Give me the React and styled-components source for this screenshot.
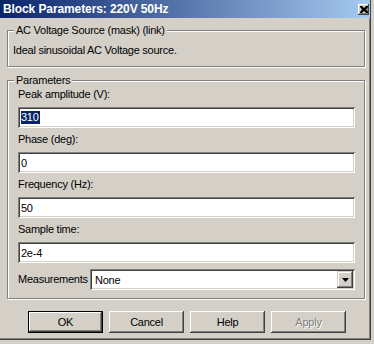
import React from "react"
import styled, { createGlobalStyle } from "styled-components"

const GlobalStyle = createGlobalStyle`
  html, body {
    margin: 0;
    padding: 0;
    background: #d4d0c8;
  }
  body {
    font-family: "Liberation Sans", Arial, sans-serif;
    font-size: 11px;
    color: #000;
  }
`

const Screen = styled.div`
  width: 374px;
  height: 344px;
  background: #d4d0c8;
  overflow: hidden;
`

const Frame = styled.div`
  box-sizing: border-box;
  width: 371px;
  height: 340px;
  display: flex;
  flex-direction: column;
  border-right: 1px solid #404040;
  border-bottom: 1px solid #404040;
  box-shadow: inset -1px -1px 0 #808080;
`

const TitleBar = styled.div`
  height: 18px;
  display: flex;
  align-items: center;
  justify-content: space-between;
  background: linear-gradient(to right, #0a246a, #a6caf0);
  padding-left: 3px;
`

const Title = styled.span`
  color: #fff;
  font-weight: bold;
  font-size: 12px;
  letter-spacing: -0.1px;
  line-height: 18px;
  white-space: nowrap;
`

const CloseButton = styled.div`
  box-sizing: border-box;
  width: 11px;
  height: 11px;
  margin-right: 1px;
  background: #d4d0c8;
  display: flex;
  align-items: center;
  justify-content: center;
  box-shadow: inset -1px -1px 0 #404040, inset 1px 1px 0 #ffffff,
    inset -2px -2px 0 #808080;
`

const Group = styled.fieldset`
  box-sizing: border-box;
  width: 358px;
  margin: ${p => p.$top}px 0 0 7px;
  padding: ${p => p.$pad};
  min-inline-size: 0;
  border: 1px solid #808080;
  box-shadow: inset 1px 1px 0 #ffffff, 1px 1px 0 #ffffff;
`

const Legend = styled.legend`
  padding: 0 2px;
  margin-left: ${p => p.$shift}px;
  font-size: 11px;
  line-height: 13px;
  letter-spacing: -0.25px;
  background: #d4d0c8;
  white-space: nowrap;
`

const Text = styled.div`
  line-height: 13px;
  letter-spacing: -0.25px;
  white-space: nowrap;
`

const FieldLabel = styled(Text)`
  margin-top: ${p => (p.$first ? 0 : 5)}px;
  margin-bottom: 6px;
`

const TextField = styled.div`
  box-sizing: border-box;
  height: 21px;
  padding-left: 3px;
  display: flex;
  align-items: center;
  background: #fff;
  letter-spacing: -0.25px;
  white-space: nowrap;
  box-shadow: inset 1px 1px 0 #808080, inset -1px -1px 0 #ffffff,
    inset 2px 2px 0 #404040, inset -2px -2px 0 #d4d0c8;
`

const Selected = styled.span`
  background: #0a246a;
  color: #fff;
  line-height: 13px;
  padding: 0 1px 0 0;
`

const SelectRow = styled.div`
  display: flex;
  align-items: center;
  margin-top: 6px;
`

const SelectLabel = styled(Text)`
  width: 72px;
  flex: none;
`

const SelectBox = styled(TextField)`
  flex: 1;
  justify-content: space-between;
  padding: 2px 2px 2px 5px;
`

const DropButton = styled.div`
  box-sizing: border-box;
  width: 16px;
  height: 17px;
  display: flex;
  align-items: center;
  justify-content: center;
  background: #d4d0c8;
  box-shadow: inset -1px -1px 0 #404040, inset 1px 1px 0 #d4d0c8,
    inset -2px -2px 0 #808080, inset 2px 2px 0 #ffffff;
`

const ButtonRow = styled.div`
  display: flex;
  gap: 6px;
  margin-top: 12px;
  padding-left: 28px;
`

const Button = styled.div`
  box-sizing: border-box;
  width: 75px;
  height: 22px;
  display: flex;
  align-items: center;
  justify-content: center;
  background: #d4d0c8;
  letter-spacing: -0.25px;
  border: ${p => (p.$default ? "1px solid #000" : "none")};
  color: ${p => (p.$disabled ? "#808080" : "#000")};
  text-shadow: ${p => (p.$disabled ? "1px 1px 0 #ffffff" : "none")};
  box-shadow: inset -1px -1px 0 #404040, inset 1px 1px 0 #ffffff,
    inset -2px -2px 0 #808080;
`

const fields = [
  { label: "Peak amplitude (V):", value: "310", selected: true },
  { label: "Phase (deg):", value: "0" },
  { label: "Frequency (Hz):", value: "50" },
  { label: "Sample time:", value: "2e-4" },
]

const App = () => {
  return (
    <Screen>
      <GlobalStyle />
      <Frame>
        <TitleBar>
          <Title>Block Parameters: 220V 50Hz</Title>
          <CloseButton>
            <svg width="8" height="7" viewBox="0 0 8 7">
              <path d="M0 0h2l2 2 2-2h2v1L6 3.5 8 6v1H6L4 5 2 7H0V6l2-2.5L0 1z" fill="#000" />
            </svg>
          </CloseButton>
        </TitleBar>

        <Group $top={6} $pad="7px 5px 9px 5px">
          <Legend $shift={1}>AC Voltage Source (mask) (link)</Legend>
          <Text>Ideal sinusoidal AC Voltage source.</Text>
        </Group>

        <Group $top={7} $pad="1px 9px 8px 10px">
          <Legend $shift={-4}>Parameters</Legend>
          {fields.map((f, i) => (
            <React.Fragment key={f.label}>
              <FieldLabel $first={i === 0}>{f.label}</FieldLabel>
              <TextField>
                {f.selected ? <Selected>{f.value}</Selected> : f.value}
              </TextField>
            </React.Fragment>
          ))}
          <SelectRow>
            <SelectLabel>Measurements</SelectLabel>
            <SelectBox>
              <span>None</span>
              <DropButton>
                <svg width="7" height="4" viewBox="0 0 7 4">
                  <path d="M0 0h7L3.5 4z" fill="#000" />
                </svg>
              </DropButton>
            </SelectBox>
          </SelectRow>
        </Group>

        <ButtonRow>
          <Button $default>OK</Button>
          <Button>Cancel</Button>
          <Button>Help</Button>
          <Button $disabled>Apply</Button>
        </ButtonRow>
      </Frame>
    </Screen>
  )
}

export default App
